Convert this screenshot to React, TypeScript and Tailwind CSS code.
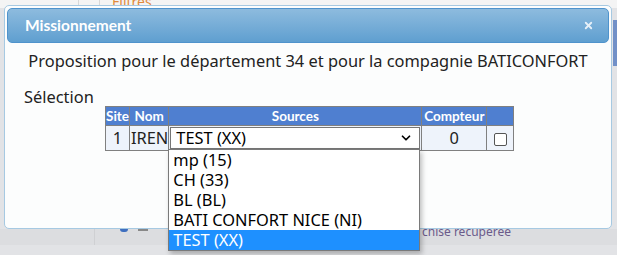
import { ChevronDown, X } from 'lucide-react';

const sources = ['mp (15)', 'CH (33)', 'BL (BL)', 'BATI CONFORT NICE (NI)', 'TEST (XX)'];

export default function App() {
  const selected = 'TEST (XX)';

  return (
    <div className="relative h-[255px] w-[617px] overflow-hidden bg-[#e2e3e6] font-['Noto_Sans',sans-serif]">
      {/* page behind the dialog */}
      <div className="flex h-[8px] bg-[#f4f4f4]">
        <div className="w-[79px] border-r border-[#d8d8d8]" />
        <div className="w-[21px] border-r border-[#d8d8d8]" />
        <span className="pl-[12px] text-[14px] leading-[4px] text-[#e08a3c]">Filtres</span>
      </div>
      <div className="absolute right-0 top-[20px] h-[46px] w-[4px] bg-[#7190c8]" />
      <div className="absolute left-0 top-[229px] flex h-[16px] w-full items-start bg-[#dcdde0]">
        <div className="h-full w-[95px] border-r border-[#cfd0d3]" />
        <div className="ml-[25px] h-[3px] w-[8px] rounded-b-sm bg-[#3f6fbf]" />
        <div className="ml-[10px] h-[2px] w-[10px] bg-[#888]" />
        <span className="ml-[274px] -mt-[6px] text-[12px] text-[#6a5a8a]">chise récupérée</span>
      </div>

      {/* dialog */}
      <div className="absolute left-[4px] top-[5px] h-[224px] w-[608px] rounded-[5px] border border-[#a6c9e2] bg-[#fcfdfd] p-[2px]">
        <div className="flex h-[35px] items-center justify-between rounded-[5px] border border-[#4f93cc] bg-gradient-to-b from-[#8dbbde] to-[#5f9fd0] pl-[17px] pr-[14px]">
          <span className="font-['Lato',sans-serif] text-[15.5px] font-bold text-white">Missionnement</span>
          <X size={11} strokeWidth={4} className="text-[#e6f0f8]" />
        </div>

        <p className="mt-[6px] text-center text-[16.4px] text-[#222]">
          Proposition pour le département 34 et pour la compagnie BATICONFORT
        </p>

        <div className="mt-[14px] pl-[17px] text-[16.4px] leading-[18px] text-[#222]">Sélection</div>

        <div className="ml-[98px] w-[409px]">
          <table className="w-[409px] border-collapse border border-[#808080] text-[16.4px] text-[#222]">
            <thead>
              <tr className="h-[19px] bg-[#4f7fd0] font-['Lato',sans-serif] text-[13.5px] font-bold leading-[16px] text-white">
                <th className="w-[23px] border border-[#808080] px-0 font-bold">Site</th>
                <th className="w-[38px] border border-[#808080] px-0 font-bold">Nom</th>
                <th className="w-[253px] border border-[#808080] px-0 font-bold">Sources</th>
                <th className="w-[65px] border border-[#808080] px-0 font-bold">Compteur</th>
                <th className="border border-[#808080]" />
              </tr>
            </thead>
            <tbody>
              <tr className="h-[24px] bg-[#eef3fb]">
                <td className="border border-[#808080] text-center">1</td>
                <td className="border border-[#808080] pl-[1px]">IREN</td>
                <td className="relative border border-[#808080] p-[1px]">
                  <div className="flex h-[22px] items-center justify-between border border-[#767676] bg-white pl-[5px] pr-[6px] text-black shadow-[0_1px_1px_rgba(0,0,0,0.1)]">
                    <span>{selected}</span>
                    <ChevronDown size={14} strokeWidth={3} />
                  </div>
                  <ul className="absolute -left-[1px] top-[23px] z-10 w-[252px] border border-[#7a7a7a] bg-white text-black shadow-[2px_3px_5px_rgba(0,0,0,0.25)]">
                    {sources.map((s) => (
                      <li
                        key={s}
                        className={
                          s === selected
                            ? 'h-[20px] bg-[#1e90ff] pl-[4px] leading-[20px] text-white'
                            : 'h-[20px] pl-[4px] leading-[20px]'
                        }
                      >
                        {s}
                      </li>
                    ))}
                  </ul>
                </td>
                <td className="border border-[#808080] text-center text-[#222]">0</td>
                <td className="border border-[#808080] text-center">
                  <span className="inline-block h-[13px] w-[13px] rounded-[2px] border border-[#555] bg-white align-middle" />
                </td>
              </tr>
            </tbody>
          </table>
        </div>
      </div>
    </div>
  );
}
